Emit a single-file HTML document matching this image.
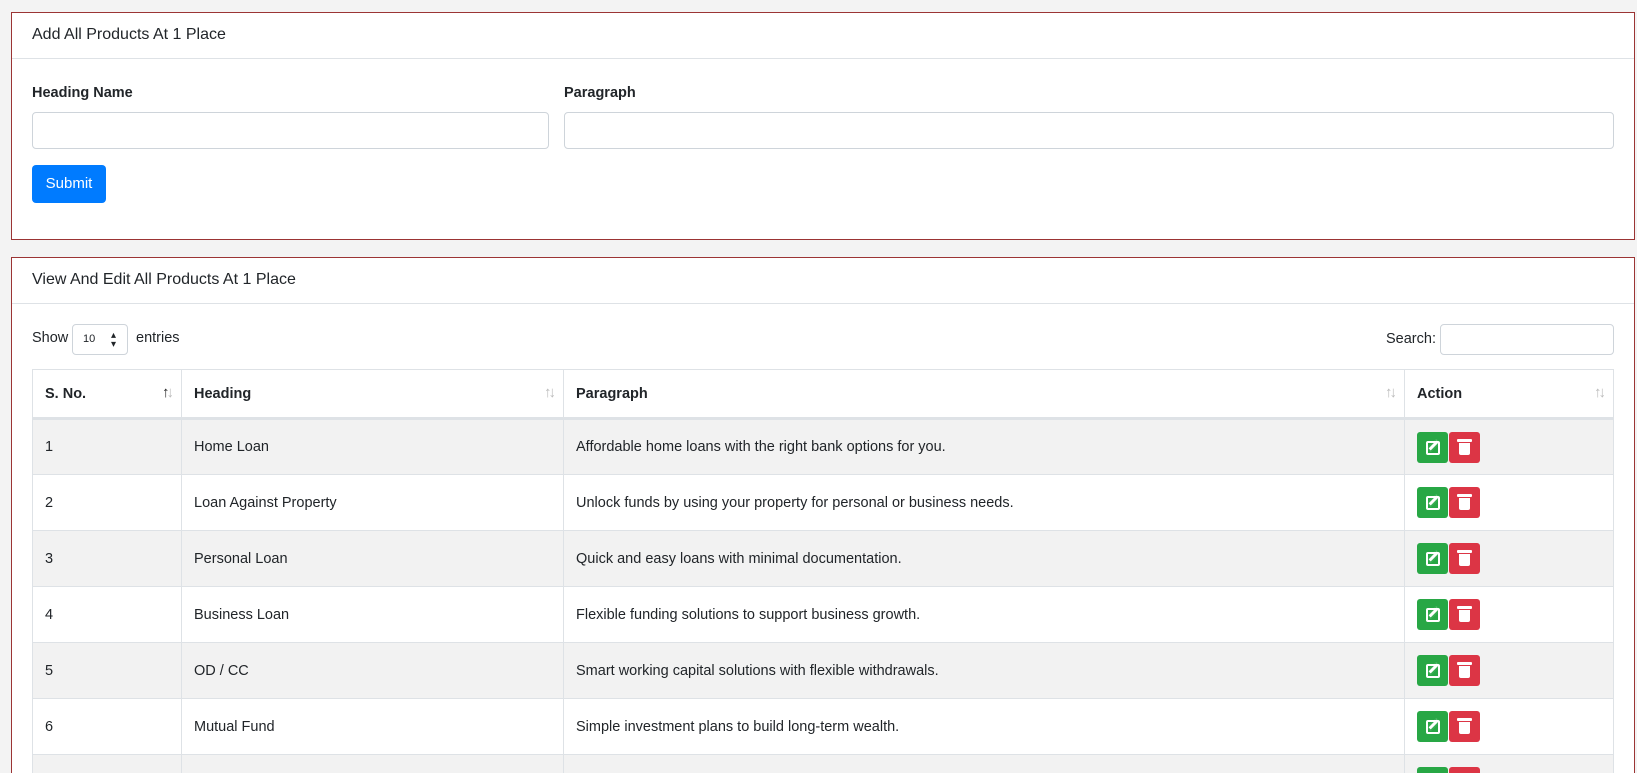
<!DOCTYPE html>
<html><head><meta charset="utf-8"><style>
*{box-sizing:border-box;margin:0;padding:0}
html,body{width:1637px;height:773px;overflow:hidden}
body{background:#f3f3f3;font-family:"Liberation Sans",sans-serif;color:#212529;font-size:14.5px}
#w{position:relative;width:1637px;height:773px;overflow:hidden}
.card{position:absolute;left:11px;width:1624px;background:#fff;border:1px solid #9b3434}
.hdr{height:46px;border-bottom:1px solid #dee2e6;padding:0 20px;line-height:44px;font-size:16px}
.abs{position:absolute}
.lbl{font-weight:bold;font-size:14.5px}
.inp{border:1px solid #ced4da;border-radius:4px;background:#fff}
.btn{background:#007bff;color:#fff;border-radius:4px;text-align:center;line-height:38px;font-size:15px}
table{position:absolute;left:20px;top:111px;width:1582px;border-collapse:collapse}
td,th{border:1px solid #dee2e6;padding:0 12px;text-align:left;height:56px}
th{height:49px;border-bottom:3px solid #dee2e6;font-weight:bold;position:relative}
th .s{position:absolute;right:10px;top:14px;color:#bbb;font-size:15px;letter-spacing:-3px}
th .s b{color:#222}
tr.o td{background:#f2f2f2}
.a{display:inline-block;width:31px;height:31px;border-radius:3px;vertical-align:middle;position:relative}
.g{background:#28a745}.r{background:#dc3545;margin-left:1px}
.g::after{content:"";position:absolute;left:9px;top:9px;width:10px;height:10px;border:2px solid #fff;border-radius:2px}
.g::before{content:"";position:absolute;left:14px;top:7px;width:3px;height:11px;background:#fff;transform:rotate(45deg);border:1px solid #28a745}
.r::after{content:"";position:absolute;left:10px;top:11px;width:11px;height:12px;background:#fff;border-radius:0 0 2px 2px}
.r::before{content:"";position:absolute;left:8px;top:7px;width:15px;height:3px;background:#fff;border-radius:1px}
</style></head><body><div id="w">
<div class="card" style="top:12px;height:228px">
<div class="hdr">Add All Products At 1 Place</div>
<div class="abs lbl" style="left:20px;top:72px">Heading Name</div>
<div class="abs lbl" style="left:552px;top:72px">Paragraph</div>
<div class="abs inp" style="left:20px;top:99px;width:517px;height:37px"></div>
<div class="abs inp" style="left:552px;top:99px;width:1050px;height:37px"></div>
<div class="abs btn" style="left:20px;top:152px;width:74px;height:38px">Submit</div>
</div>
<div class="card" style="top:257px;height:540px">
<div class="hdr">View And Edit All Products At 1 Place</div>
<div class="abs" style="left:20px;top:72px">Show</div>
<div class="abs inp" style="left:60px;top:66px;width:56px;height:31px;font-size:11px;padding:8px 0 0 10px">10<span style="position:absolute;right:11px;top:6px;font-size:10px;line-height:9px">▴<br>▾</span></div>
<div class="abs" style="left:124px;top:72px">entries</div>
<div class="abs" style="left:1374px;top:73px">Search:</div>
<div class="abs inp" style="left:1428px;top:66px;width:174px;height:31px"></div>
<table>
<tr><th style="width:149px">S. No.<span class="s"><b>↑</b>↓</span></th><th style="width:382px">Heading<span class="s">↑↓</span></th><th style="width:841px">Paragraph<span class="s">↑↓</span></th><th>Action<span class="s">↑↓</span></th></tr>
<tr class="o"><td>1</td><td>Home Loan</td><td>Affordable home loans with the right bank options for you.</td><td><span class="a g"></span><span class="a r"></span></td></tr>
<tr><td>2</td><td>Loan Against Property</td><td>Unlock funds by using your property for personal or business needs.</td><td><span class="a g"></span><span class="a r"></span></td></tr>
<tr class="o"><td>3</td><td>Personal Loan</td><td>Quick and easy loans with minimal documentation.</td><td><span class="a g"></span><span class="a r"></span></td></tr>
<tr><td>4</td><td>Business Loan</td><td>Flexible funding solutions to support business growth.</td><td><span class="a g"></span><span class="a r"></span></td></tr>
<tr class="o"><td>5</td><td>OD / CC</td><td>Smart working capital solutions with flexible withdrawals.</td><td><span class="a g"></span><span class="a r"></span></td></tr>
<tr><td>6</td><td>Mutual Fund</td><td>Simple investment plans to build long-term wealth.</td><td><span class="a g"></span><span class="a r"></span></td></tr>
<tr class="o"><td></td><td></td><td></td><td><span class="a g"></span><span class="a r"></span></td></tr>
</table>
</div>
</div></body></html>
